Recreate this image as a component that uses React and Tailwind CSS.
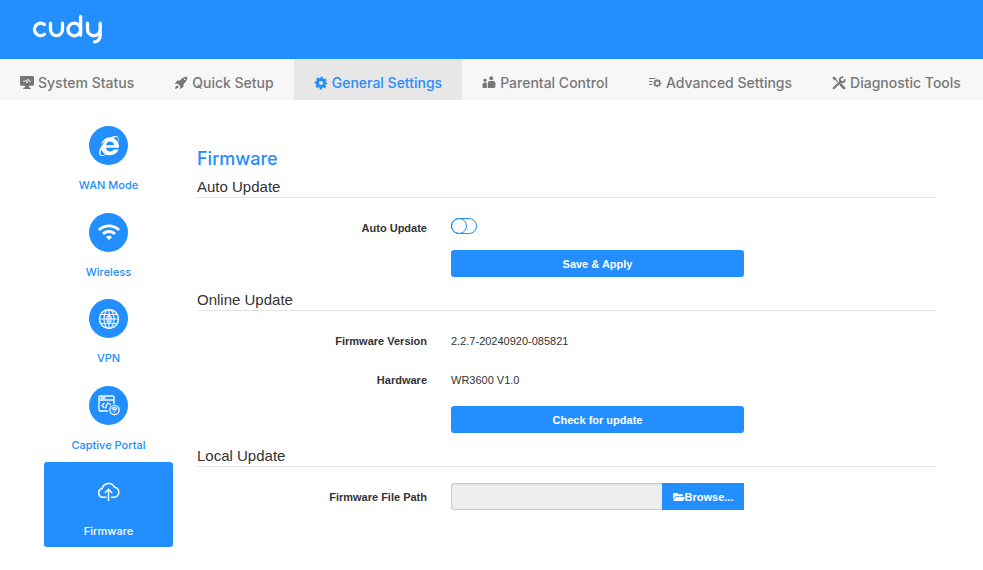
import { FaFolderOpen, FaInternetExplorer } from "react-icons/fa";
import { MdWifi } from "react-icons/md";

function Logo() {
  return (
    <svg viewBox="0 0 72 30" className="h-[30px] w-[72px]" fill="none" stroke="#fff" strokeWidth="3.300" strokeLinecap="round" role="img" aria-label="cudy">
      <path d="M12.500 10.500A6.200 6.200 0 1 0 12.500 20.300" />
      <path d="M18.500 9.200V15.600A6 6 0 0 0 30.500 15.600V9.200" />
      <circle cx="42.300" cy="15.500" r="6.300" />
      <path d="M48.600 2.500V21" />
      <path d="M55.500 9.200V15.400A6.300 6.300 0 0 0 68.200 15.400V9.200M68.200 15V21.500A6 6 0 0 1 62.600 27.800" />
    </svg>
  );
}

function MonitorIcon() {
  return (
    <svg viewBox="0 0 14 14" className="size-3.5">
      <path fill="currentColor" d="M1.200 0H12.800Q14 0 14 1.200V8.600Q14 9.800 12.800 9.800H9v1.500l1.800.6v1H3.200v-1l1.800-.6V9.800H1.200Q0 9.800 0 8.600V1.200Q0 0 1.200 0z" />
      <path d="M3 5.300h2l.9-1.400 1.200 3 1.100-4 .9 2.400h1.900" fill="none" stroke="#f7f7f7" strokeWidth="0.800" />
    </svg>
  );
}

function RocketIcon() {
  return (
    <svg viewBox="0 0 14 14" className="size-3.5">
      <path fill="currentColor" fillRule="evenodd" d="M13.300.700C10.200.600 8 1.900 6 4.400L3.200 4.600.8 8 3.700 7.800 6.200 10.300 6 13.200 9.400 10.800 9.600 8C12.100 6 13.400 3.800 13.300.700zM10.700 2.500A.8.800 0 1 1 10.700 4.100.8.800 0 0 1 10.700 2.500z" />
      <path fill="currentColor" d="M3 9.200 4.800 11Q3.800 12.700 1 13 1.300 10.200 3 9.200z" />
    </svg>
  );
}

function GearIcon() {
  return (
    <svg viewBox="0 0 14 14" className="size-3.5" fill="none" stroke="currentColor">
      <circle cx="7" cy="7" r="3.600" strokeWidth="3" />
      <circle cx="7" cy="7" r="5.300" strokeWidth="2.200" strokeDasharray="2.200 1.963" strokeDashoffset="1.100" />
    </svg>
  );
}

function FamilyIcon() {
  return (
    <svg viewBox="0 0 14 14" className="size-3.5" fill="currentColor">
      <circle cx="9.200" cy="2.200" r="2" />
      <circle cx="3" cy="4.200" r="1.600" />
      <path d="M5.800 12V7.100q0-2.200 2.200-2.200h3q2.400 0 2.400 2.400v3.100q0 1.600-1.600 1.600z" />
      <path d="M.6 12V8.400Q.6 6.600 2.300 6.600h1.500q1 0 1 1V12z" />
    </svg>
  );
}

function AdvancedIcon() {
  return (
    <svg viewBox="0 0 14 14" className="size-3.5" fill="none" stroke="currentColor">
      <path d="M1 2.500h6.500M1 5.500h3.500M1 8.500h3.500" strokeWidth="1.200" />
      <circle cx="9.300" cy="7.200" r="2.500" strokeWidth="1.500" />
      <path d="M9.300 3.100v1.400M9.300 9.900v1.400M5.200 7.200h1.400M12 7.200h1.400M6.400 4.300l1 1M11.200 9.100l1 1M12.200 4.300l-1 1M7.400 9.100l-1 1" strokeWidth="1.300" />
    </svg>
  );
}

function ToolsIcon() {
  return (
    <svg viewBox="0 0 14 14" className="size-3.5" fill="none" stroke="currentColor">
      <path fill="currentColor" stroke="none" d="M.4 1.600 1.600.400 4.200 2 4.300 3.400 6.300 5.400 5.400 6.300 3.400 4.300 2 4.200z" />
      <path d="M8.700 8.700 12.200 12.200" strokeWidth="2.600" strokeLinecap="round" />
      <path d="M1.700 12.300 8.800 5.200" strokeWidth="2.200" strokeLinecap="round" />
      <path d="M11.300 1.500A2.500 2.500 0 1 0 12.700 3.300" strokeWidth="1.900" />
    </svg>
  );
}

function VpnIcon() {
  return (
    <svg viewBox="0 0 22 22" className="size-[22px]" fill="none" stroke="currentColor" strokeWidth="1.100">
      <circle cx="11" cy="11" r="9.500" strokeWidth="1.400" />
      <ellipse cx="11" cy="11" rx="5" ry="9.500" />
      <path d="M11 1.500v19M1.500 11h19M3 6.500h16M3 15.500h16" />
      <rect x="9" y="8" width="4" height="6" rx="1" />
    </svg>
  );
}

function PortalIcon() {
  return (
    <svg viewBox="0 0 24 22" className="h-[22px] w-6" fill="none" stroke="currentColor" strokeWidth="1.300">
      <path d="M11 17H3.200Q2 17 2 15.800V3.200Q2 2 3.200 2h12.600Q17 2 17 3.200V10" />
      <path d="M2 6h15M3.500 4h5M7.500 9l-2.500 2.500L7.500 14M11.500 9l2.200 2M10.700 8.500l-2.200 6" />
      <circle cx="17.500" cy="16" r="4.700" />
      <path d="M14.700 14.800q2.800-2.400 5.600 0M15.700 16.200q1.800-1.500 3.600 0M17.500 17.200v1.400" />
    </svg>
  );
}

function CloudUploadIcon() {
  return (
    <svg viewBox="0 0 24 22" className="h-[22px] w-6" fill="none" stroke="currentColor" strokeWidth="1.500" strokeLinecap="round" strokeLinejoin="round">
      <path d="M9 16.200H5.800A4.400 4.400 0 0 1 5.200 7.500 6.600 6.600 0 0 1 17.600 6.200 5.100 5.100 0 0 1 17.800 16.200H14.500" />
      <path d="M11.500 19.500V8.500M8.300 11.500l3.200-3.200L14.700 11.500" />
    </svg>
  );
}

const tabs = [
  { label: "System Status", icon: <MonitorIcon /> },
  { label: "Quick Setup", icon: <RocketIcon /> },
  { label: "General Settings", icon: <GearIcon />, active: true },
  { label: "Parental Control", icon: <FamilyIcon /> },
  { label: "Advanced Settings", icon: <AdvancedIcon /> },
  { label: "Diagnostic Tools", icon: <ToolsIcon /> },
];

const sections = [
  { label: "WAN Mode", icon: <FaInternetExplorer className="size-5" /> },
  { label: "Wireless", icon: <MdWifi className="size-6" /> },
  { label: "VPN", icon: <VpnIcon /> },
  { label: "Captive Portal", icon: <PortalIcon /> },
  { label: "Firmware", icon: <CloudUploadIcon />, active: true },
];

function Section({ title, children }) {
  return (
    <section>
      <h2 className="border-b border-[#e5e5e5] text-[15px] leading-5 text-[#333]">{title}</h2>
      {children}
    </section>
  );
}

function Row({ label, htmlFor, children }) {
  const Tag = htmlFor ? "label" : "span";
  return (
    <div className="grid h-[39px] grid-cols-[230fr_293fr_167fr] items-center gap-x-6">
      <Tag htmlFor={htmlFor} className="text-right font-bold text-[#333]">{label}</Tag>
      {children}
    </div>
  );
}

function ActionButton({ children }) {
  return (
    <div className="grid grid-cols-[230fr_293fr_167fr] gap-x-6">
      <button type="button" className="col-start-2 h-[27px] rounded-[3px] bg-[#238efe] font-bold text-white">
        {children}
      </button>
    </div>
  );
}

export default function App() {
  return (
    <div className="min-h-screen bg-white font-['Liberation_Sans',Arial,sans-serif] text-[11px] leading-4 text-[#333]">
      <header className="h-[59px] bg-[#238efe] px-8 pt-3.5">
        <Logo />
      </header>
      <nav className="flex h-[41px] bg-[#f7f7f7]">
        {tabs.map((t) => (
          <a
            key={t.label}
            href="#"
            className={`flex items-center gap-1 px-5 pt-1.5 font-['Inter',sans-serif] text-[14px] font-medium whitespace-nowrap ${t.active ? "bg-[#e7e7e7] text-[#238efe]" : "text-[#777]"}`}
          >
            {t.icon}
            {t.label}
          </a>
        ))}
      </nav>
      <div className="flex gap-6 pr-12 pl-11">
        <aside className="mt-4 flex h-[431px] w-[129px] shrink-0 flex-col justify-between">
          {sections.map((s) => (
            <a
              key={s.label}
              href="#"
              className={`flex h-[85px] flex-col items-center gap-3 rounded-[3px] pt-2.5 font-['Inter',sans-serif] font-medium ${s.active ? "bg-[#238efe] text-white" : "text-[#238efe]"}`}
            >
              <span className="flex size-[39px] items-center justify-center rounded-full bg-[#238efe] text-white">
                {s.icon}
              </span>
              {s.label}
            </a>
          ))}
        </aside>
        <main className="min-w-0 flex-1 pt-[47px]">
          <h1 className="mb-[6px] font-['Inter',sans-serif] text-[18px] leading-6 font-medium text-[#238efe]">Firmware</h1>
          <Section title="Auto Update">
            <div className="pt-2.5 pb-[13px]">
              <Row label="Auto Update" htmlFor="auto">
                <span className="relative mt-2.5 flex h-4 w-[26px] self-start rounded-full border border-[#238efe]">
                  <input id="auto" type="checkbox" className="peer absolute inset-0 cursor-pointer opacity-0" />
                  <span className="-m-px size-4 rounded-full border border-[#238efe] peer-checked:ml-auto" />
                </span>
              </Row>
              <div className="pt-[3px]">
                <ActionButton>Save &amp; Apply</ActionButton>
              </div>
            </div>
          </Section>
          <Section title="Online Update">
            <div className="pt-2.5 pb-[13px]">
              <Row label="Firmware Version">2.2.7-20240920-085821</Row>
              <Row label="Hardware">WR3600 V1.0</Row>
              <div className="pt-[7px]">
                <ActionButton>Check for update</ActionButton>
              </div>
            </div>
          </Section>
          <Section title="Local Update">
            <div className="pt-2.5">
              <Row label="Firmware File Path" htmlFor="path">
                <span className="flex h-[27px]">
                  <input id="path" type="text" readOnly className="min-w-0 flex-1 rounded-l-[3px] border border-r-0 border-[#ccc] bg-[#eee] px-2 shadow-[inset_0_1px_1px_rgba(0,0,0,0.08)]" />
                  <button type="button" className="flex w-[82px] items-center justify-center bg-[#238efe] font-bold text-white">
                    <FaFolderOpen className="size-3" />
                    Browse...
                  </button>
                </span>
              </Row>
            </div>
          </Section>
        </main>
      </div>
    </div>
  );
}
